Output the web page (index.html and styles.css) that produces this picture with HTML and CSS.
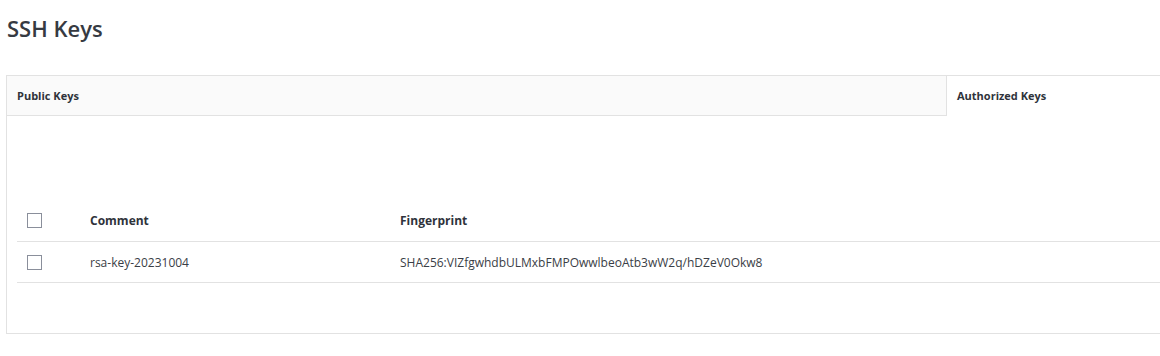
FILE: index.html
```html
<!DOCTYPE html>
<html>
<head>
<meta charset="utf-8">
<link rel="stylesheet" href="styles.css">
</head>
<body>
<div class="page">
  <h1 class="title">SSH Keys</h1>
  <div class="panel">
    <div class="tabs">
      <div class="tab tab-public">Public Keys</div>
      <div class="tab tab-auth">Authorized Keys</div>
    </div>
    <div class="panel-body">
      <div class="toolbar"></div>
      <table class="keys">
        <thead>
          <tr>
            <th class="col-check"><span class="checkbox"></span></th>
            <th class="col-comment">Comment</th>
            <th class="col-fp">Fingerprint</th>
          </tr>
        </thead>
        <tbody>
          <tr>
            <td class="col-check"><span class="checkbox"></span></td>
            <td class="col-comment">rsa-key-20231004</td>
            <td class="col-fp">SHA256:VIZfgwhdbULMxbFMPOwwlbeoAtb3wW2q/hDZeV0Okw8</td>
          </tr>
        </tbody>
      </table>
    </div>
  </div>
</div>
</body>
</html>
```

FILE: styles.css
```css
html, body {
  margin: 0;
  padding: 0;
  background: #fff;
  overflow: hidden;
}
body {
  font-family: "Open Sans", "Noto Sans", sans-serif;
  color: #333840;
}
.page {
  padding: 12px 0 0 6px;
  width: 1240px;
}
.title {
  margin: 0 0 0 1px;
  font-size: 22px;
  font-weight: 600;
  line-height: 32px;
  color: #363a42;
  height: 63px;
}
.panel {
  border: 1px solid #e2e2e2;
  height: 257px;
  box-sizing: content-box;
}
.tabs {
  display: flex;
  height: 40px;
}
.tab {
  font-size: 11px;
  font-weight: 700;
  display: flex;
  align-items: center;
  padding-left: 10px;
  color: #2f333b;
}
.tab-public {
  width: 929px;
  background: #fafafa;
  border-bottom: 1px solid #e2e2e2;
  border-right: 1px solid #e2e2e2;
}
.tab-auth {
  flex: 1;
  background: #fff;
  padding-bottom: 1px;
}
.panel-body {
  padding: 0 0 0 10px;
}
.toolbar {
  height: 84px;
}
.keys {
  border-collapse: collapse;
  width: 100%;
  font-size: 12px;
}
.keys th, .keys td {
  text-align: left;
  height: 40px;
  padding: 0;
  vertical-align: middle;
}
.keys th {
  height: 41px;
  font-weight: 700;
  font-size: 12px;
  color: #2f333b;
  border-bottom: 1px solid #e2e2e2;
}
.keys td {
  color: #3a3e46;
  border-bottom: 1px solid #e2e2e2;
}
.col-check {
  width: 63px;
  padding-left: 10px !important;
}
.col-comment {
  width: 310px;
}
.checkbox {
  display: block;
  width: 13px;
  height: 13px;
  border: 1px solid #8a8f9b;
  background: #fff;
}
```
